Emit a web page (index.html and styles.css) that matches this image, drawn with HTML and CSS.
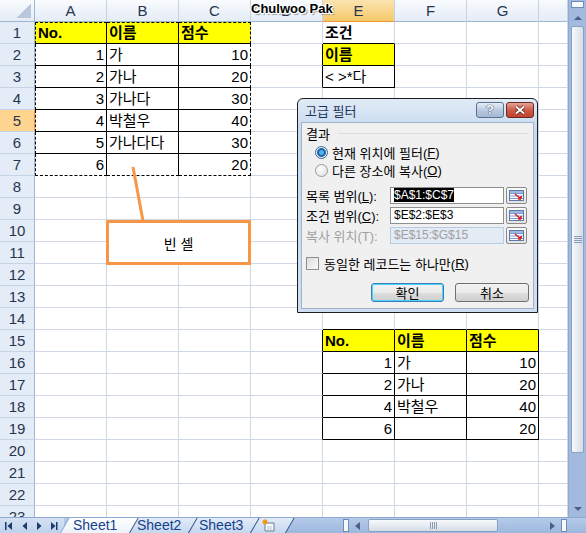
FILE: index.html
```html
<!DOCTYPE html>
<html>
<head>
  <meta charset="utf-8">
  <title>고급 필터</title>
  <link rel="stylesheet" href="styles.css">
</head>
<body>
  <div class="excel">
    <div class="sheet-area">
      <table class="sheet">
        <colgroup>
          <col class="c-hd"><col class="c-w"><col class="c-w"><col class="c-w"><col class="c-w"><col class="c-w"><col class="c-w"><col class="c-w"><col class="c-h">
        </colgroup>
        <thead>
          <tr><th class="corner"></th><th>A</th><th>B</th><th>C</th><th>D</th><th class="sel">E</th><th>F</th><th>G</th><th></th></tr>
        </thead>
        <tbody>
          <tr><th>1</th><td class="y b dl dt">No.</td><td class="y b dt">이름</td><td class="y b dt dr">점수</td><td></td><td class="kb h">조건</td><td></td><td></td><td></td></tr>
          <tr><th>2</th><td class="n b dl">1</td><td class="b">가</td><td class="n b dr">10</td><td class="kr"></td><td class="y b">이름</td><td></td><td></td><td></td></tr>
          <tr><th>3</th><td class="n b dl">2</td><td class="b">가나</td><td class="n b dr">20</td><td class="kr"></td><td class="b">&lt; &gt;*다</td><td></td><td></td><td></td></tr>
          <tr><th>4</th><td class="n b dl">3</td><td class="b">가나다</td><td class="n b dr">30</td><td></td><td></td><td></td><td></td><td></td></tr>
          <tr><th class="sel">5</th><td class="n b dl">4</td><td class="b">박철우</td><td class="n b dr">40</td><td></td><td></td><td></td><td></td><td></td></tr>
          <tr><th>6</th><td class="n b dl">5</td><td class="b">가나다다</td><td class="n b dr">30</td><td></td><td></td><td></td><td></td><td></td></tr>
          <tr><th>7</th><td class="n b dl db">6</td><td class="b db"></td><td class="n b dr db">20</td><td></td><td></td><td></td><td></td><td></td></tr>
          <tr><th>8</th><td></td><td></td><td></td><td></td><td></td><td></td><td></td><td></td></tr>
          <tr><th>9</th><td></td><td></td><td></td><td></td><td></td><td></td><td></td><td></td></tr>
          <tr><th>10</th><td></td><td></td><td></td><td></td><td></td><td></td><td></td><td></td></tr>
          <tr><th>11</th><td></td><td></td><td></td><td></td><td></td><td></td><td></td><td></td></tr>
          <tr><th>12</th><td></td><td></td><td></td><td></td><td></td><td></td><td></td><td></td></tr>
          <tr><th>13</th><td></td><td></td><td></td><td></td><td></td><td></td><td></td><td></td></tr>
          <tr><th>14</th><td></td><td></td><td></td><td></td><td class="kb"></td><td class="kb"></td><td class="kb"></td><td></td></tr>
          <tr><th>15</th><td></td><td></td><td></td><td class="kr"></td><td class="y b">No.</td><td class="y b">이름</td><td class="y b">점수</td><td></td></tr>
          <tr><th>16</th><td></td><td></td><td></td><td class="kr"></td><td class="n b">1</td><td class="b">가</td><td class="n b">10</td><td></td></tr>
          <tr><th>17</th><td></td><td></td><td></td><td class="kr"></td><td class="n b">2</td><td class="b">가나</td><td class="n b">20</td><td></td></tr>
          <tr><th>18</th><td></td><td></td><td></td><td class="kr"></td><td class="n b">4</td><td class="b">박철우</td><td class="n b">40</td><td></td></tr>
          <tr><th>19</th><td></td><td></td><td></td><td class="kr"></td><td class="n b">6</td><td class="b"></td><td class="n b">20</td><td></td></tr>
          <tr><th>20</th><td></td><td></td><td></td><td></td><td></td><td></td><td></td><td></td></tr>
          <tr><th>21</th><td></td><td></td><td></td><td></td><td></td><td></td><td></td><td></td></tr>
          <tr><th>22</th><td></td><td></td><td></td><td></td><td></td><td></td><td></td><td></td></tr>
          <tr><th>23</th><td></td><td></td><td></td><td></td><td></td><td></td><td></td><td></td></tr>
        </tbody>
      </table>
    </div>

    <div class="vscroll">
      <span class="split"></span>
      <span class="arrow up"></span>
      <span class="thumb"><i></i></span>
      <span class="track"></span>
      <span class="arrow down"></span>
    </div>

    <div class="tabbar">
      <div class="tabnav">
        <svg width="60" height="16" viewBox="0 0 60 16">
          <g fill="#1d3a6e">
            <rect x="5" y="4" width="1.5" height="8"/><path d="M12 4 L12 12 L7.5 8 Z"/>
            <path d="M27 4 L27 12 L22.5 8 Z"/>
            <path d="M37 4 L37 12 L41.5 8 Z"/>
            <path d="M51 4 L51 12 L55.5 8 Z"/><rect x="56" y="4" width="1.5" height="8"/>
          </g>
        </svg>
      </div>
      <div class="tabs">
        <span class="tab active">Sheet1</span>
        <span class="tab">Sheet2</span>
        <span class="tab">Sheet3</span>
        <span class="tab add">
          <svg width="16" height="14" viewBox="0 0 16 14">
            <path d="M4 4 H13 V12 H4 Z" fill="#f4f7fb" stroke="#6a7c98"/>
            <path d="M6 8 H11 M6 10 H11" stroke="#b8c4d6"/>
            <circle cx="4" cy="3" r="2.4" fill="#f6b33a"/>
            <path d="M4 0 V6 M1 3 H7 M2 1 L6 5 M6 1 L2 5" stroke="#e88a14" stroke-width="0.8"/>
          </svg>
        </span>
      </div>
      <div class="hscroll">
        <span class="split"></span>
        <span class="harrow left"></span>
        <span class="hthumb"><i></i></span>
        <span class="htrack"></span>
        <span class="harrow right"></span>
        <span class="split"></span>
      </div>
    </div>

    <div class="watermark">Chulwoo Pak</div>

    <svg class="leader" width="20" height="60" viewBox="0 0 20 60">
      <line x1="5" y1="3" x2="15" y2="57" stroke="#f79646" stroke-width="3"/>
    </svg>
    <div class="callout">빈 셀</div>

    <div class="dialog">
      <div class="dlg-title">
        <span>고급 필터</span>
        <span class="tb help">?</span>
        <span class="tb close">
          <svg width="14" height="10" viewBox="0 0 14 10">
            <path d="M3 1.5 L11 8.5 M11 1.5 L3 8.5" stroke="#5a1d14" stroke-width="3.6"/>
            <path d="M3 1.5 L11 8.5 M11 1.5 L3 8.5" stroke="#fff" stroke-width="2"/>
          </svg>
        </span>
      </div>
      <div class="dlg-body">
        <div class="group"><span>결과</span><i></i></div>
        <div class="radio on"><span class="dot"></span>현재 위치에 필터(<u>F</u>)</div>
        <div class="radio"><span class="dot"></span>다른 장소에 복사(<u>O</u>)</div>
        <div class="field first">
          <span class="lbl">목록 범위(<u>L</u>):</span>
          <span class="inp"><b class="hl">$A$1:$C$7</b></span>
          <span class="pick"><svg width="15" height="11" viewBox="0 0 15 11"><rect x="0.5" y="0.5" width="14" height="10" fill="#fff" stroke="#5d7aa6"/><path d="M1 3.5 H14 M1 6 H14 M1 8.5 H14" stroke="#7d9bd0"/><rect x="1" y="1" width="13" height="2" fill="#9cb6e0"/><path d="M6 4 L12 9 M12 9 L12 6 M12 9 L9 9" stroke="#d42020" stroke-width="1.6"/></svg></span>
        </div>
        <div class="field">
          <span class="lbl">조건 범위(<u>C</u>):</span>
          <span class="inp">$E$2:$E$3</span>
          <span class="pick"><svg width="15" height="11" viewBox="0 0 15 11"><rect x="0.5" y="0.5" width="14" height="10" fill="#fff" stroke="#5d7aa6"/><path d="M1 3.5 H14 M1 6 H14 M1 8.5 H14" stroke="#7d9bd0"/><rect x="1" y="1" width="13" height="2" fill="#9cb6e0"/><path d="M6 4 L12 9 M12 9 L12 6 M12 9 L9 9" stroke="#d42020" stroke-width="1.6"/></svg></span>
        </div>
        <div class="field off">
          <span class="lbl">복사 위치(T):</span>
          <span class="inp">$E$15:$G$15</span>
          <span class="pick"><svg width="15" height="11" viewBox="0 0 15 11"><rect x="0.5" y="0.5" width="14" height="10" fill="#fff" stroke="#5d7aa6"/><path d="M1 3.5 H14 M1 6 H14 M1 8.5 H14" stroke="#7d9bd0"/><rect x="1" y="1" width="13" height="2" fill="#9cb6e0"/><path d="M6 4 L12 9 M12 9 L12 6 M12 9 L9 9" stroke="#d42020" stroke-width="1.6"/></svg></span>
        </div>
        <div class="check"><span class="box"></span>동일한 레코드는 하나만(<u>R</u>)</div>
        <div class="actions">
          <span class="btn default">확인</span>
          <span class="btn">취소</span>
        </div>
      </div>
    </div>
  </div>
</body>
</html>
```

FILE: styles.css
```css
*{
  box-sizing: border-box;
}
body{
  margin: 0;
  font-family: "Liberation Sans", "Noto Sans CJK KR", sans-serif;
}
.excel{
  position: relative;
  width: 586px;
  height: 533px;
  display: grid;
  grid-template-columns: 568px 18px;
  grid-template-rows: 517px 16px;
  overflow: hidden;
  background: #fff;
}
.sheet-area{
  overflow: hidden;
}

/* grid */
.sheet{
  border-collapse: separate;
  border-spacing: 0;
  table-layout: fixed;
  width: 568px;
  font-size: 15px;
}
.c-hd{ width: 35px; }
.c-w{ width: 72px; }
.c-h{ width: 29px; }
.sheet tr{
  height: 22px;
}
.sheet td{
  padding: 0 2px;
  border-right: 1px solid #d0d7e5;
  border-bottom: 1px solid #d0d7e5;
  white-space: nowrap;
  overflow: hidden;
  line-height: 20px;
  color: #000;
}
.sheet th{
  padding: 0;
  font-weight: normal;
  color: #27364f;
  line-height: 20px;
}
.sheet thead th{
  background: linear-gradient(#f9fbfd, #e4ecf7);
  border-right: 1px solid #c5d3e3;
  border-bottom: 1px solid #9eb6ce;
}
.sheet tbody th{
  background: #e4ecf7;
  border-right: 1px solid #9eb6ce;
  border-bottom: 1px solid #c5d3e3;
}
.sheet thead th.sel{
  background: linear-gradient(#fbe3b0, #f6c96a);
  border-bottom-color: #f29436;
}
.sheet tbody th.sel{
  background: #ffd58f;
  border-right-color: #f29436;
}
.sheet th.corner{
  background: linear-gradient(to top left, #b8c7da 50%, transparent 50%) right 3px bottom 3px / 15px 14px no-repeat,
              linear-gradient(#f9fbfd, #e4ecf7);
  border-right-color: #9eb6ce;
}

.y{
  background: #ffff00;
  font-weight: bold;
}
.h{
  font-weight: bold;
}
.n{
  text-align: right;
}
.sheet td.b{
  border-right-color: #000;
  border-bottom-color: #000;
}
.sheet td.kb{
  border-bottom-color: #000;
}
.sheet td.kr{
  border-right-color: #000;
}
.sheet td.dl{
  border-left: 1px dashed #000;
}
.sheet td.dt{
  border-top: 1px dashed #000;
}
.sheet td.dr{
  border-right: 1px dashed #000;
}
.sheet td.db{
  border-bottom: 1px dashed #000;
}

/* vertical scrollbar */
.vscroll{
  display: flex;
  flex-direction: column;
  align-items: center;
  background: #a3badf;
  border-left: 1px solid #8ea9d3;
}
.vscroll .split{
  width: 13px;
  height: 7px;
  margin: 1px 0;
  background: #f6f8fb;
  border: 1px solid #6f8cb8;
}
.arrow{
  height: 17px;
  width: 100%;
  display: flex;
  align-items: center;
  justify-content: center;
}
.arrow::before{
  content: "";
  border: 4px solid transparent;
}
.arrow.up::before{
  border-top: 0;
  border-bottom: 4px solid #4a5f88;
}
.arrow.down::before{
  border-bottom: 0;
  border-top: 4px solid #4a5f88;
}
.thumb{
  width: 13px;
  height: 427px;
  border: 1px solid #8aa1c4;
  border-radius: 2px;
  background: linear-gradient(to right, #f7f9fc, #e4e9f0 60%, #d3dbe6);
  display: flex;
  align-items: center;
  justify-content: center;
}
.thumb i{
  width: 8px;
  height: 7px;
  background: repeating-linear-gradient(#8a9bb5 0 1px, transparent 1px 2px);
}
.track{
  flex: 1;
}

/* sheet tabs */
.tabbar{
  grid-column: 1 / span 2;
  display: flex;
  background: linear-gradient(#b6cbe9, #9db7de);
  border-top: 1px solid #8da8d2;
}
.tabnav{
  width: 64px;
  height: 15px;
  background: linear-gradient(#d4e1f3, #bfd2ec);
}
.tabs{
  display: flex;
  height: 15px;
}
.tab{
  position: relative;
  z-index: 0;
  width: 62px;
  padding-left: 11px;
  font-size: 14px;
  line-height: 15px;
  color: #15428b;
}
.tab::before{
  content: "";
  position: absolute;
  z-index: -1;
  top: 0;
  bottom: 0;
  left: 0;
  right: 0;
  transform: skewX(-30deg);
  transform-origin: bottom left;
  background: linear-gradient(#e3ecf8, #c5d7ef);
  border-left: 1px solid #2f5088;
}
.tab.active{
  z-index: 1;
  padding-left: 9px;
}
.tab.active::before{
  left: -4px;
  right: -4px;
  transform-origin: bottom right;
  background: linear-gradient(#fff, #edf2f9);
  border-left: 1px solid #8da8d2;
  border-right: 1px solid #2f5088;
}
.tab.add{
  width: 36px;
  padding: 0 0 0 11px;
}
.tab.add::before{
  border-right: 1px solid #2f5088;
}
.tab.add svg{
  display: block;
  margin-top: 1px;
}

/* horizontal scrollbar */
.hscroll{
  display: flex;
  align-items: center;
  width: 224px;
  height: 15px;
  margin-left: auto;
  margin-right: 19px;
}
.hscroll .split{
  width: 6px;
  height: 13px;
  background: #f6f8fb;
  border: 1px solid #6f8cb8;
}
.harrow{
  width: 17px;
  height: 15px;
  display: flex;
  align-items: center;
  justify-content: center;
}
.harrow::before{
  content: "";
  border: 4px solid transparent;
}
.harrow.left::before{
  border-left: 0;
  border-right: 5px solid #4a5f88;
}
.harrow.right::before{
  border-right: 0;
  border-left: 5px solid #4a5f88;
}
.hthumb{
  width: 130px;
  height: 13px;
  margin-left: 2px;
  border: 1px solid #8aa1c4;
  border-radius: 2px;
  background: linear-gradient(#f7f9fc, #e4e9f0 60%, #d3dbe6);
  display: flex;
  align-items: center;
  justify-content: center;
}
.hthumb i{
  width: 7px;
  height: 7px;
  background: repeating-linear-gradient(to right, #8a9bb5 0 1px, transparent 1px 2px);
}
.htrack{
  flex: 1;
}

/* overlays */
.watermark{
  position: absolute;
  left: 251px;
  top: 1px;
  font-size: 13px;
  font-weight: bold;
  color: #000;
  text-shadow: 1px 1px 0 #fff, -1px -1px 0 #fff, 1px -1px 0 #fff, -1px 1px 0 #fff, 2px 2px 1px #999;
}
.leader{
  position: absolute;
  left: 128px;
  top: 164px;
}
.callout{
  position: absolute;
  left: 106px;
  top: 220px;
  width: 145px;
  height: 45px;
  border: 3px solid #f79646;
  background: #fff;
  display: flex;
  align-items: center;
  justify-content: center;
  font-size: 14px;
  color: #000;
}

/* dialog */
.dialog{
  position: absolute;
  left: 297px;
  top: 98px;
  width: 241px;
  height: 215px;
  border: 1px solid #1e1e1e;
  border-radius: 6px 6px 0 0;
  background: linear-gradient(#e1ebf7, #c8daef 30px, #cfdff1);
  padding: 0 3px 3px;
  display: flex;
  flex-direction: column;
  font-size: 13px;
  color: #000;
}
.dlg-title{
  height: 23px;
  display: flex;
  align-items: center;
  padding-left: 4px;
  font-size: 13px;
  color: #1b3558;
}
.dlg-title span:first-child{
  flex: 1;
}
.tb{
  width: 28px;
  height: 16px;
  border: 1px solid #5c6e8a;
  border-radius: 3px;
  display: flex;
  align-items: center;
  justify-content: center;
  margin-top: -2px;
}
.help{
  background: linear-gradient(#e6eef8, #b9cbe2 50%, #a4b9d6);
  color: #fff;
  font-weight: bold;
  font-size: 13px;
  text-shadow: 0 0 1px #1f2f48, 0 0 1px #1f2f48;
  margin-right: 2px;
}
.close{
  background: linear-gradient(#e7a597, #cf5b47 50%, #c0422e);
  border-color: #6b2a20;
}
.close svg{
  display: block;
}
.dlg-body{
  flex: 1;
  background: #f0f0f0;
  border: 1px solid #9fb3cc;
  padding-top: 1px;
}
.group{
  display: flex;
  align-items: center;
  height: 18px;
  padding-left: 4px;
}
.group i{
  flex: 1;
  height: 1px;
  margin: 0 4px 0 8px;
  background: #d5dfe5;
}
.radio{
  display: flex;
  align-items: center;
  height: 18px;
  padding-left: 13px;
}
.radio.on{
  margin-top: 1px;
}
.dot{
  width: 13px;
  height: 13px;
  border-radius: 50%;
  border: 1px solid #9a9a9a;
  background: radial-gradient(circle at 40% 40%, #fff, #dcdcdc);
  margin-right: 4px;
}
.radio.on .dot{
  border-color: #3a6a97;
  background: radial-gradient(circle, #4fb2f0 0 2px, #1a5e9c 3px, #2a6fad 4px, #e8eef5 5px, #d8dde4);
}
.field{
  display: flex;
  align-items: center;
  height: 17px;
  margin-top: 3px;
  padding-left: 4px;
}
.field.first{
  margin-top: 8px;
}
.lbl{
  width: 84px;
  white-space: nowrap;
}
.inp{
  width: 114px;
  height: 17px;
  border: 1px solid #8e8f8f;
  background: #fff;
  padding-left: 3px;
  font-size: 12px;
  line-height: 15px;
}
.hl{
  font-weight: normal;
  background: #000;
  color: #fff;
}
.pick{
  width: 21px;
  height: 17px;
  margin-left: 2px;
  border: 1px solid #8b8b8b;
  border-radius: 2px;
  background: linear-gradient(#fbfbfb, #e3e3e3);
  display: flex;
  align-items: center;
  justify-content: center;
}
.field.off{
  color: #a0a0a0;
}
.field.off .inp{
  background: #e3ebf4;
  border-color: #b7cbe3;
}
.check{
  display: flex;
  align-items: center;
  height: 16px;
  margin-top: 11px;
  padding-left: 4px;
}
.box{
  width: 13px;
  height: 13px;
  border: 1px solid #8e8f8f;
  background: linear-gradient(135deg, #dcdcdc, #fbfbfb);
  margin-right: 5px;
}
.actions{
  display: flex;
  justify-content: flex-end;
  gap: 11px;
  margin-top: 12px;
  padding-right: 4px;
}
.btn{
  width: 74px;
  height: 19px;
  border: 1px solid #707070;
  border-radius: 3px;
  background: linear-gradient(#f2f2f2, #ebebeb 50%, #dddddd 51%, #cfcfcf);
  display: flex;
  align-items: center;
  justify-content: center;
  font-size: 13px;
}
.btn.default{
  width: 73px;
  border-color: #3c7fb1;
  box-shadow: inset 0 0 0 1px #48d2ff;
}
```
